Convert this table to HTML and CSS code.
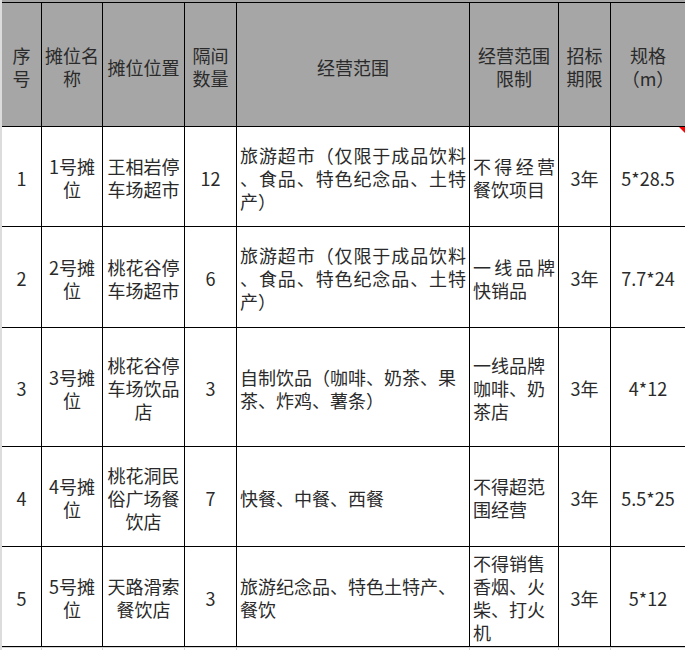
FILE: index.html
```html
<!DOCTYPE html>
<html lang="zh-CN">
<head>
<meta charset="utf-8">
<title>摊位招标</title>
<link rel="stylesheet" href="styles.css">
</head>
<body>
<div class="sheet">
  <div class="topstrip"></div>
  <div class="grid">
    <div class="cell head center">序号</div>
    <div class="cell head center">摊位名称</div>
    <div class="cell head center">摊位位置</div>
    <div class="cell head center">隔间数量</div>
    <div class="cell head center">经营范围</div>
    <div class="cell head center">经营范围限制</div>
    <div class="cell head center">招标期限</div>
    <div class="cell head center">规格（m）</div>

    <div class="cell center">1</div>
    <div class="cell center">1号摊位</div>
    <div class="cell center">王相岩停车场超市</div>
    <div class="cell center">12</div>
    <div class="cell text just">旅游超市（仅限于成品饮料、食品、特色纪念品、土特产）</div>
    <div class="cell text just">不得经营餐饮项目</div>
    <div class="cell center">3年</div>
    <div class="cell center">5*28.5<span class="flag"></span></div>

    <div class="cell center">2</div>
    <div class="cell center">2号摊位</div>
    <div class="cell center">桃花谷停车场超市</div>
    <div class="cell center">6</div>
    <div class="cell text just">旅游超市（仅限于成品饮料、食品、特色纪念品、土特产）</div>
    <div class="cell text just">一线品牌快销品</div>
    <div class="cell center">3年</div>
    <div class="cell center">7.7*24</div>

    <div class="cell center">3</div>
    <div class="cell center">3号摊位</div>
    <div class="cell center">桃花谷停车场饮品店</div>
    <div class="cell center">3</div>
    <div class="cell text">自制饮品（咖啡、奶茶、果茶、炸鸡、薯条）</div>
    <div class="cell text">一线品牌咖啡、奶茶店</div>
    <div class="cell center">3年</div>
    <div class="cell center">4*12</div>

    <div class="cell center">4</div>
    <div class="cell center">4号摊位</div>
    <div class="cell center">桃花洞民俗广场餐饮店</div>
    <div class="cell center">7</div>
    <div class="cell text">快餐、中餐、西餐</div>
    <div class="cell text">不得超范围经营</div>
    <div class="cell center">3年</div>
    <div class="cell center">5.5*25</div>

    <div class="cell center">5</div>
    <div class="cell center">5号摊位</div>
    <div class="cell center">天路滑索餐饮店</div>
    <div class="cell center">3</div>
    <div class="cell text">旅游纪念品、特色土特产、餐饮</div>
    <div class="cell text">不得销售香烟、火柴、打火机</div>
    <div class="cell center">3年</div>
    <div class="cell center">5*12</div>
  </div>
  <div class="ghost">
    <div></div><div></div><div></div><div></div><div></div><div></div><div></div><div></div>
  </div>
</div>
</body>
</html>
```

FILE: styles.css
```css
html, body {
  margin: 0;
  padding: 0;
  overflow: hidden;
  background: #ffffff;
}

.sheet {
  width: 683px;
  height: 650px;
  border-left: 2px solid #dcdcdc;
  font-family: "Noto Sans CJK SC", sans-serif;
  font-size: 18px;
  line-height: 23px;
  color: #2a2a2a;
}

.topstrip {
  height: 2px;
  background: #a6a6a6;
}

.grid {
  display: grid;
  grid-template-columns: 39px 60px 81px 51px 232px 88px 51px 74px;
  grid-template-rows: 123px 99px 100px 118px 99px 99px;
  gap: 1px;
  padding: 1px 0;
  background: #000000;
}

.cell {
  position: relative;
  display: flex;
  flex-direction: column;
  justify-content: center;
  background: #ffffff;
  padding: 3px 3px 0 3px;
  overflow: hidden;
}

.head {
  background: #a6a6a6;
  padding-top: 5px;
}

.center {
  text-align: center;
}

.text {
  text-align: left;
  line-break: anywhere;
}

.just {
  text-align: justify;
}

.flag {
  position: absolute;
  top: 0;
  right: 0;
  width: 0;
  height: 0;
  border-top: 6px solid #ff0000;
  border-left: 6px solid transparent;
}

.ghost {
  display: grid;
  grid-template-columns: 39px 60px 81px 51px 232px 88px 51px 74px;
  grid-template-rows: 20px;
  gap: 1px;
  padding-top: 1px;
  background: #d4d4d4;
}

.ghost div {
  background: #ffffff;
}
```
